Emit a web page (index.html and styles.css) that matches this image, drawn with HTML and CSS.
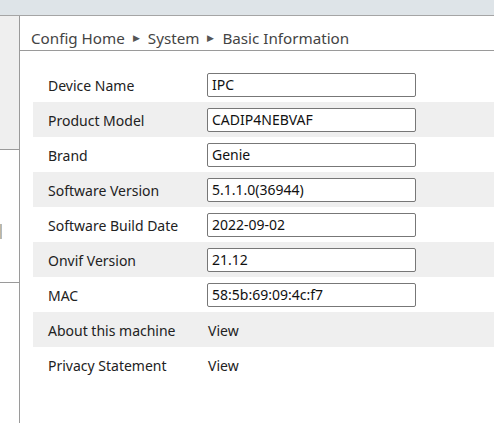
FILE: index.html
```html
<!DOCTYPE html>
<html>
<head>
<meta charset="utf-8">
<link rel="stylesheet" href="styles.css">
</head>
<body>
<div class="topbar"></div>
<div class="main">
  <div class="sidebar">
    <div class="side-top"></div>
    <div class="side-mid"><span class="mark"></span></div>
  </div>
  <div class="content">
    <div class="breadcrumb">
      <span>Config Home</span><span class="arrow">&#9654;</span><span>System</span><span class="arrow">&#9654;</span><span>Basic Information</span>
    </div>
    <div class="table">
      <div class="row"><div class="label">Device Name</div><div class="field">IPC</div></div>
      <div class="row alt"><div class="label">Product Model</div><div class="field">CADIP4NEBVAF</div></div>
      <div class="row"><div class="label">Brand</div><div class="field">Genie</div></div>
      <div class="row alt"><div class="label">Software Version</div><div class="field">5.1.1.0(36944)</div></div>
      <div class="row"><div class="label">Software Build Date</div><div class="field">2022-09-02</div></div>
      <div class="row alt"><div class="label">Onvif Version</div><div class="field">21.12</div></div>
      <div class="row"><div class="label">MAC</div><div class="field">58:5b:69:09:4c:f7</div></div>
      <div class="row alt"><div class="label">About this machine</div><div class="link">View</div></div>
      <div class="row"><div class="label">Privacy Statement</div><div class="link">View</div></div>
    </div>
  </div>
</div>
</body>
</html>
```
FILE: styles.css
```css
html, body {
  margin: 0;
  padding: 0;
  background: #fff;
  font-family: "Noto Sans", "Open Sans", sans-serif;
  color: #222;
  overflow: hidden;
}
.topbar {
  height: 15px;
  background: #dee4e8;
  border-bottom: 1px solid #a5a5a5;
}
.main {
  display: flex;
  height: 407px;
}
.sidebar {
  width: 19px;
  border-right: 1px solid #9a9a9a;
  flex: none;
}
.side-top {
  height: 133px;
  background: #efefef;
  border-bottom: 1px solid #9a9a9a;
}
.side-mid {
  height: 133px;
  box-sizing: border-box;
  border-bottom: 1px solid #9a9a9a;
  padding-top: 74px;
}
.mark {
  display: block;
  width: 2px;
  height: 15px;
  background: linear-gradient(90deg, #c9b592, #a9bcd0);
}
.content {
  flex: 1;
}
.breadcrumb {
  height: 35px;
  box-sizing: border-box;
  padding: 9px 0 0 11px;
  border-bottom: 1px solid #9a9a9a;
  display: flex;
  align-items: center;
  font-size: 15.2px;
  color: #444;
  gap: 8px;
}
.arrow {
  font-size: 9px;
  color: #555;
}
.table {
  margin: 16px 0 0 13px;
}
.row {
  height: 35px;
  box-sizing: border-box;
  padding-top: 2px;
  display: flex;
  align-items: center;
  font-size: 14px;
}
.row.alt {
  background: #efefef;
}
.label {
  width: 159px;
  padding-left: 15px;
  flex: none;
}
.field {
  width: 203px;
  height: 22px;
  margin-top: -2px;
  border: 1px solid #777;
  border-radius: 2px;
  background: #fff;
  line-height: 22px;
  padding-left: 4px;
  color: #111;
}
.link {
  padding-left: 1px;
}
```
